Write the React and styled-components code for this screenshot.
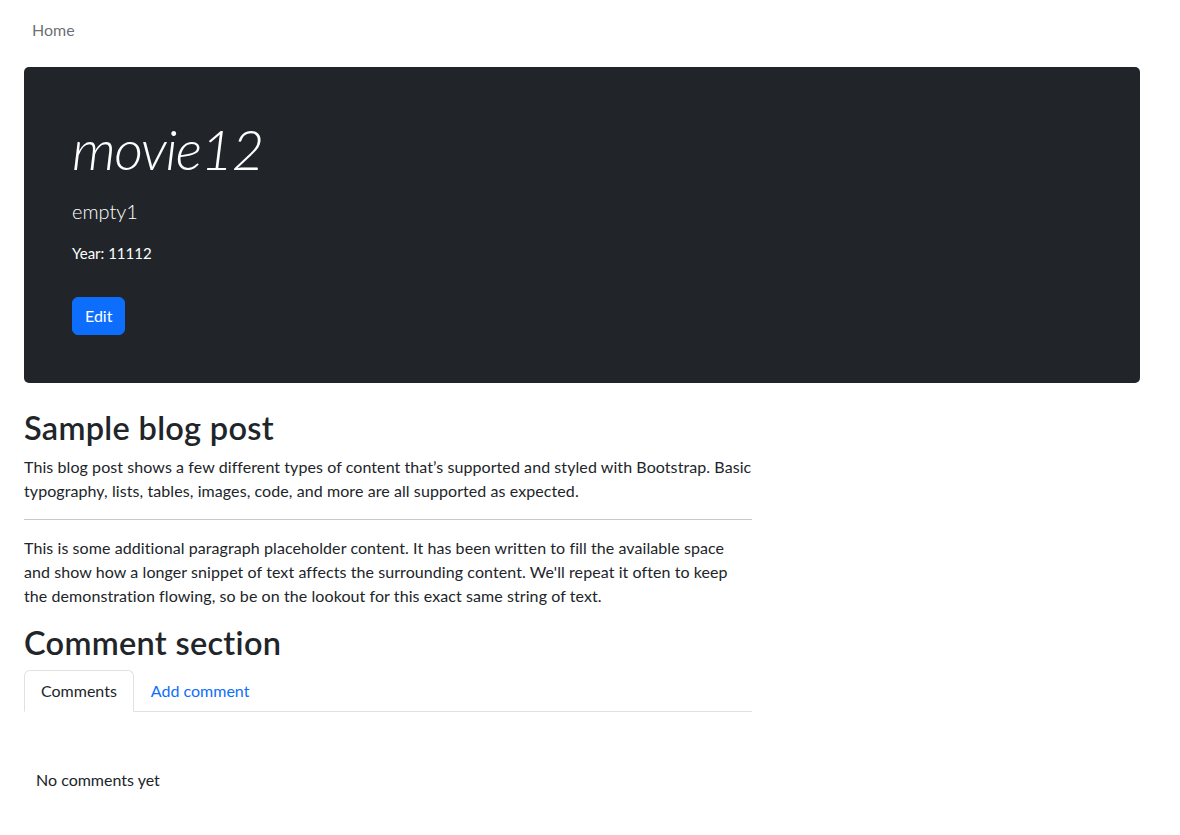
import React, { useState } from "react";
import styled, { createGlobalStyle } from "styled-components";

const GlobalStyle = createGlobalStyle`
  * { box-sizing: border-box; }
  body {
    margin: 0;
    font-family: Lato, "Liberation Sans", sans-serif;
    font-size: 16px;
    line-height: 1.5;
    color: #212529;
    background: #fff;
  }
`;

const Page = styled.div`
  width: 1116px;
  margin-left: 24px;
`;

const Navbar = styled.nav`
  display: flex;
  align-items: center;
  padding: 8px 0;
  height: 59px;
`;

const NavLink = styled.a`
  padding: 8px;
  color: rgba(33, 37, 41, 0.68);
  text-decoration: none;
`;

const Jumbotron = styled.section`
  background: #212529;
  color: #fff;
  border-radius: 5px;
  padding: 48px;
  margin-top: 8px;
  margin-bottom: 26px;
`;

const Title = styled.h1`
  margin: 0 0 14px;
  font-size: 56px;
  font-weight: 300;
  font-style: italic;
  letter-spacing: -1.4px;
  line-height: 1.2;
`;

const Lead = styled.p`
  margin: 0 0 15px;
  font-size: 20px;
  font-weight: 300;
  line-height: 30px;
`;

const Meta = styled.p`
  margin: 0 0 32px;
  font-size: 15px;
  line-height: 24px;
`;

const Button = styled.button`
  display: inline-block;
  height: 38px;
  padding: 6px 12px;
  border: 1px solid #0d6efd;
  border-radius: 6px;
  background: #0d6efd;
  color: #fff;
  font-family: inherit;
  font-size: 16px;
  line-height: 24px;
  cursor: pointer;
`;

const Article = styled.article`
  width: 728px;
`;

const Heading = styled.h2`
  margin: 0 0 8px;
  font-size: 32.5px;
  font-weight: 600;
  letter-spacing: 0.3px;
  line-height: 38px;
`;

const Para = styled.p`
  margin: 0 0 16px;
  letter-spacing: 0.08px;
`;

const Rule = styled.hr`
  margin: 0 0 16px;
  border: 0;
  border-top: 1px solid #c8c9ca;
`;

const Tabs = styled.ul`
  display: flex;
  list-style: none;
  margin: 3px 0 0;
  padding: 0;
  border-bottom: 1px solid #dee2e6;
`;

const Tab = styled.li`
  margin-bottom: -1px;
`;

const TabLink = styled.button`
  display: block;
  padding: 8px 16px;
  font-family: inherit;
  font-size: 16px;
  line-height: 24px;
  background: ${(p) => (p.$active ? "#fff" : "transparent")};
  cursor: pointer;
  border: 1px solid ${(p) => (p.$active ? "#dee2e6" : "transparent")};
  border-bottom-color: ${(p) => (p.$active ? "#fff" : "transparent")};
  border-radius: 6px 6px 0 0;
  color: ${(p) => (p.$active ? "#212529" : "#0d6efd")};
`;

const TabPane = styled.div`
  padding: 56px 12px 24px;
`;

export default function App() {
  const [tab, setTab] = useState("comments");

  return (
    <>
      <GlobalStyle />
      <Page>
        <Navbar>
          <NavLink href="#">Home</NavLink>
        </Navbar>

        <Jumbotron>
          <Title>movie12</Title>
          <Lead>empty1</Lead>
          <Meta>Year: 11112</Meta>
          <Button>Edit</Button>
        </Jumbotron>

        <Article>
          <Heading>Sample blog post</Heading>
          <Para>
            This blog post shows a few different types of content that’s
            supported and styled with Bootstrap. Basic typography, lists,
            tables, images, code, and more are all supported as expected.
          </Para>
          <Rule />
          <Para>
            This is some additional paragraph placeholder content. It has been
            written to fill the available space and show how a longer snippet
            of text affects the surrounding content. We'll repeat it often to
            keep the demonstration flowing, so be on the lookout for this exact
            same string of text.
          </Para>

          <Heading>Comment section</Heading>
          <Tabs>
            <Tab>
              <TabLink
                $active={tab === "comments"}
                onClick={() => setTab("comments")}
              >
                Comments
              </TabLink>
            </Tab>
            <Tab>
              <TabLink $active={tab === "add"} onClick={() => setTab("add")}>
                Add comment
              </TabLink>
            </Tab>
          </Tabs>
          <TabPane>
            {tab === "comments" ? "No comments yet" : ""}
          </TabPane>
        </Article>
      </Page>
    </>
  );
}
